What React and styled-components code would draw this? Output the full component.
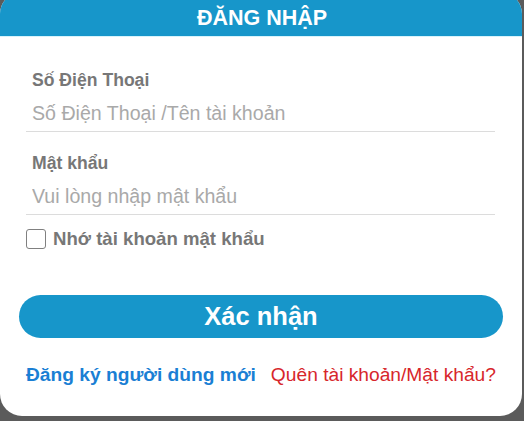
import React, { useState } from "react";
import styled, { createGlobalStyle } from "styled-components";

const GlobalStyle = createGlobalStyle`
  html, body {
    margin: 0;
    padding: 0;
    background: #5b5b5b;
    font-family: "Liberation Sans", Arial, sans-serif;
  }
`;

const Modal = styled.div`
  width: 522px;
  margin-top: -8px;
  height: 424px;
  background: #fff;
  border-radius: 22px;
  overflow: hidden;
  display: flex;
  flex-direction: column;
`;

const Header = styled.div`
  height: 45px;
  padding-top: 8px;
  box-sizing: border-box;
  background: #1796ca;
  border-bottom: 1px solid #d8f3fb;
  color: #fff;
  font-weight: bold;
  font-size: 21.5px;
  display: flex;
  align-items: center;
  justify-content: center;
  padding-left: 2px;
`;

const Body = styled.div`
  padding: 31px 27px 0 26px;
  display: flex;
  flex-direction: column;
`;

const Field = styled.div`
  display: flex;
  flex-direction: column;
  margin-bottom: ${(p) => p.gap || 0}px;
`;

const Label = styled.label`
  padding-left: 6px;
  font-size: 17.6px;
  font-weight: bold;
  color: #777;
  line-height: 24px;
`;

const Input = styled.input`
  border: none;
  border-bottom: 1px solid #dcdcdc;
  outline: none;
  padding: 10px 6px 6px;
  font-family: inherit;
  font-size: 19.6px;
  color: #555;
  background: transparent;
  &::placeholder {
    color: #a9a9a9;
  }
`;

const CheckRow = styled.label`
  display: flex;
  align-items: center;
  gap: 7px;
  margin-top: 13px;
  font-size: 18.6px;
  font-weight: bold;
  color: #777;
  cursor: pointer;
`;

const Box = styled.span`
  width: 20px;
  height: 20px;
  border: 1.5px solid #808080;
  border-radius: 3px;
  box-sizing: border-box;
  background: ${(p) => (p.checked ? "#1796ca" : "#fff")};
`;

const Submit = styled.button`
  margin: 45px -8px 0 -7px;
  height: 43px;
  border: none;
  border-radius: 22px;
  background: #1796ca;
  color: #fff;
  font-family: inherit;
  font-weight: bold;
  font-size: 25.5px;
  cursor: pointer;
`;

const Links = styled.div`
  display: flex;
  gap: 15px;
  margin-top: 26px;
  margin-right: -10px;
  font-size: 19.2px;
  white-space: nowrap;
`;

const LinkText = styled.a`
  flex-shrink: 0;
  color: ${(p) => p.color};
  font-weight: ${(p) => (p.bold ? "bold" : "normal")};
  text-decoration: none;
`;

export default function App() {
  const [remember, setRemember] = useState(false);
  return (
    <>
      <GlobalStyle />
      <Modal>
        <Header>ĐĂNG NHẬP</Header>
        <Body>
          <Field gap={19}>
            <Label>Số Điện Thoại</Label>
            <Input placeholder="Số Điện Thoại /Tên tài khoản" />
          </Field>
          <Field>
            <Label>Mật khẩu</Label>
            <Input type="password" placeholder="Vui lòng nhập mật khẩu" />
          </Field>
          <CheckRow onClick={() => setRemember(!remember)}>
            <Box checked={remember} />
            Nhớ tài khoản mật khẩu
          </CheckRow>
          <Submit>Xác nhận</Submit>
          <Links>
            <LinkText color="#1a7fd4" bold>Đăng ký người dùng mới</LinkText>
            <LinkText color="#d7262b">Quên tài khoản/Mật khẩu?</LinkText>
          </Links>
        </Body>
      </Modal>
    </>
  );
}
